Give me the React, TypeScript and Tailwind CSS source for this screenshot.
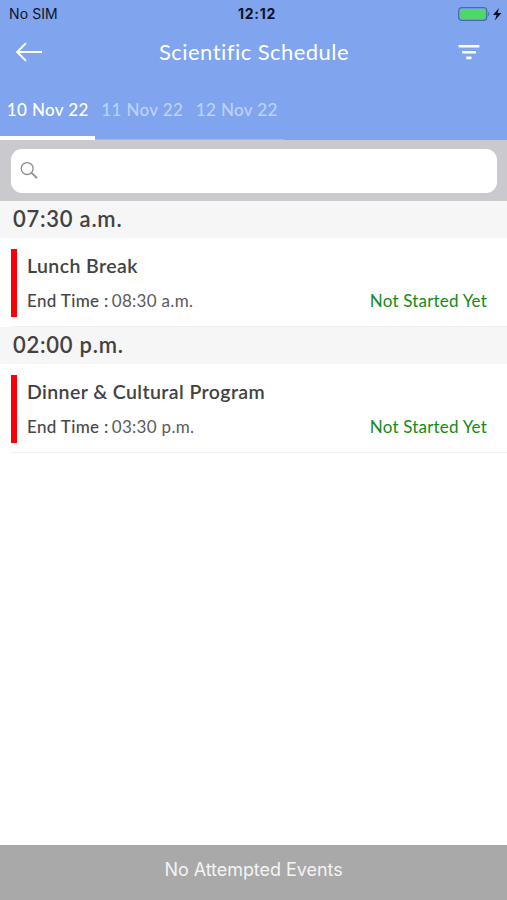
import { useState } from "react";

const days = ["10 Nov 22", "11 Nov 22", "12 Nov 22"];

const sessions = [
  {
    start: "07:30 a.m.",
    title: "Lunch Break",
    end: "08:30 a.m.",
    status: "Not Started Yet",
  },
  {
    start: "02:00 p.m.",
    title: "Dinner & Cultural Program",
    end: "03:30 p.m.",
    status: "Not Started Yet",
  },
];

function StatusBar() {
  return (
    <div className="flex h-7 items-center justify-between pl-[9px] pr-[5px] font-['Inter',sans-serif] text-[14px] text-[#0b1426]">
      <span className="w-20 pb-[2px] tracking-[0.1px]">No SIM</span>
      <span className="pb-[2px] pl-[3px] font-bold tracking-[0.7px]">12:12</span>
      <span className="flex w-20 justify-end pb-[1px]">
        <svg width="44" height="16" viewBox="0 0 44 16">
          <rect x="0.7" y="1.7" width="28" height="12.6" rx="3" fill="none" stroke="#4a6ba8" strokeWidth="1.3" />
          <rect x="2.3" y="3.3" width="24.8" height="9.4" rx="1.5" fill="#4cd964" />
          <path d="M30.2 5.8c1.6.7 1.6 3.7 0 4.4z" fill="#4a6ba8" />
          <path d="M41 2 35 8.9h3.6L36.8 14.4 43.4 7h-3.8z" fill="#0b0f1a" />
        </svg>
      </span>
    </div>
  );
}

export default function App() {
  const [activeDay, setActiveDay] = useState(0);
  const [query, setQuery] = useState("");

  return (
    <div className="flex h-[900px] w-[507px] flex-col overflow-hidden bg-white font-['Lato',sans-serif] text-[#424242]">
      <header className="flex h-[140px] shrink-0 flex-col bg-[#80a5ee] text-white">
        <StatusBar />
        <div className="flex h-12 items-center justify-between pl-4 pr-[27px]">
          <button aria-label="Back">
            <svg width="27" height="20" viewBox="0 0 27 20" fill="none" stroke="currentColor" strokeWidth="1.9">
              <path d="M26 10H1.2M10 1.2 1.2 10l8.8 8.8" />
            </svg>
          </button>
          <h1 className="pb-[1px] pl-[7px] text-[22px] leading-none tracking-[0.45px]">Scientific Schedule</h1>
          <button aria-label="Filter">
            <svg width="22" height="16" viewBox="0 0 22 16" fill="currentColor">
              <rect x="0.5" y="1" width="21" height="2.6" rx="0.8" />
              <rect x="4" y="7" width="14" height="2.6" rx="0.8" />
              <rect x="8.2" y="12.6" width="5.4" height="2.6" rx="0.8" />
            </svg>
          </button>
        </div>

        {/* Day tabs */}
        <nav className="flex h-16">
          {days.map((day, index) => (
            <button
              key={day}
              onClick={() => setActiveDay(index)}
              className={`flex w-[94.5px] justify-center whitespace-nowrap pl-[1px] pt-6 text-[17px] font-medium leading-[20px] tracking-[0.35px] ${
                index === activeDay
                  ? "border-b-4 border-white text-white"
                  : "border-b border-[#9dbaf2] text-[#bdd1f8]"
              }`}
            >
              {day}
            </button>
          ))}
        </nav>
      </header>

      <div className="h-[61px] shrink-0 bg-[#c9c9ce] px-[10.5px] pt-[9px]">
        <label className="flex h-11 items-center rounded-[11px] bg-white pl-[9px]">
          <svg width="20" height="20" viewBox="0 0 20 20" fill="none" stroke="#8e8e93">
            <circle cx="7.6" cy="7.4" r="6.3" strokeWidth="1.4" />
            <path d="m12.2 12 5.8 5.6" strokeWidth="2" />
          </svg>
          <input
            value={query}
            onChange={(e) => setQuery(e.target.value)}
            className="ml-2 w-full bg-transparent text-[17px] outline-none"
          />
        </label>
      </div>

      <main className="flex-1">
        {sessions.map((session) => (
          <section key={session.start} className="h-[126px]">
            <h2 className="flex h-[37px] items-center bg-[#f6f6f7] pb-px pl-[13px] text-[22px] font-semibold leading-[26px] tracking-[0.75px]">
              {session.start}
            </h2>
            <div className="ml-[11px] flex h-[89px] items-start border-b border-[#f1f1f1] pt-[11px]">
              <div className="h-[68px] w-[6px] bg-[#fb0007]" />
              <div className="flex-1 pl-[10px] pr-[20px]">
                <h3 className="pt-[6px] text-[19.5px] font-semibold leading-[22px] tracking-[0.4px]">
                  {session.title}
                </h3>
                <div className="mt-[14px] flex justify-between text-[17px] leading-[20px]">
                  <p className="tracking-[0.3px] text-[#5a5a5a]">
                    <span className="mr-[3px] font-medium tracking-[0.35px] text-[#484848]">End Time :</span>
                    {session.end}
                  </p>
                  <p className="tracking-[0.2px] text-[#148a17]">{session.status}</p>
                </div>
              </div>
            </div>
          </section>
        ))}
      </main>

      <footer className="flex h-[55px] shrink-0 justify-center bg-[#a9a9a9] pt-[15px] font-['Inter',sans-serif] text-[18px] leading-[20px] tracking-[-0.05px] text-[#f4f4f4]">
        No Attempted Events
      </footer>
    </div>
  );
}
